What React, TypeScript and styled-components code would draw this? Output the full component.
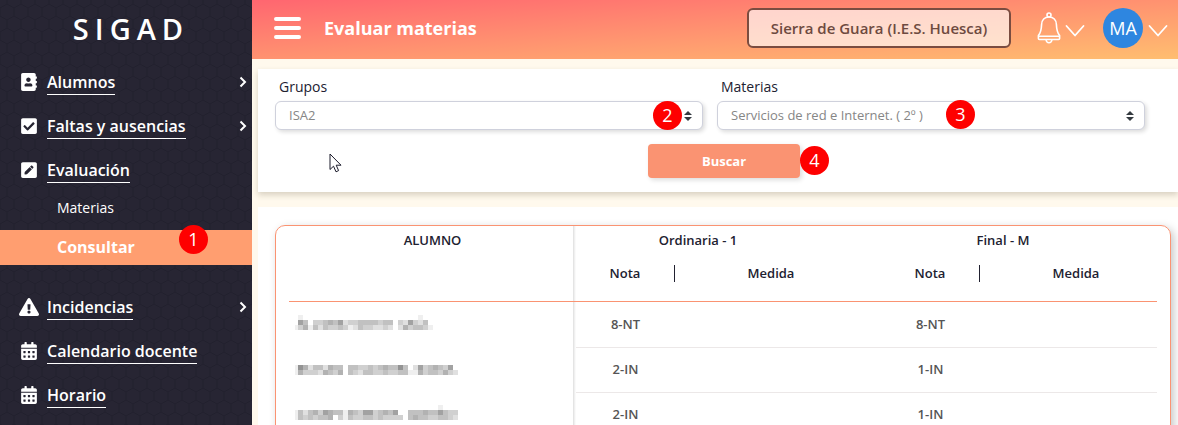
import React from 'react';
import styled, { createGlobalStyle, css } from 'styled-components';
import {
  FaAddressBook,
  FaCheckSquare,
  FaPenSquare,
  FaExclamationTriangle,
  FaCalendarAlt,
} from 'react-icons/fa';

const coral = '#fa9372';
const ink = '#212130';

const hexagons = `url("data:image/svg+xml,%3Csvg xmlns='http://www.w3.org/2000/svg' width='14' height='24' viewBox='0 0 14 24'%3E%3Cpath d='M7 0v4l7 4v8l-7 4v4M7 4L0 8v8l7 4' fill='none' stroke='%231d1c28' stroke-opacity='.55'/%3E%3C/svg%3E")`;
const selectArrows = `url("data:image/svg+xml,%3Csvg xmlns='http://www.w3.org/2000/svg' viewBox='0 0 4 5'%3E%3Cpath fill='%23343a40' d='M2 0L0 2h4zm0 5L0 3h4z'/%3E%3C/svg%3E")`;

const GlobalStyle = createGlobalStyle`
  * { box-sizing: border-box; }
  body {
    margin: 0;
    background: #fff9ed;
    color: ${ink};
    font-family: 'Open Sans', 'Noto Sans', sans-serif;
    font-size: 14px;
  }
  button, select { font-family: inherit; }
`;

const Shell = styled.div`
  position: relative;
  display: flex;
  height: 100vh;
  overflow: hidden;
`;

/* Sidebar */

const Sidebar = styled.aside`
  flex: 0 0 252px;
  background: #272533 ${hexagons};
  color: #fff;
`;

const Brand = styled.div`
  height: 60px;
  padding-left: 10px;
  line-height: 57px;
  font-size: 29px;
  font-weight: 600;
  letter-spacing: 6px;
  text-align: center;
`;

const Menu = styled.ul`
  margin: 0;
  padding: 0;
  list-style: none;
`;

const MenuLink = styled.a`
  display: flex;
  align-items: flex-start;
  height: 44px;
  padding: 10px 5px 0 19px;
  color: #fff;
  text-decoration: none;
`;

const MenuIcon = styled.span<{ $wide?: boolean }>`
  display: flex;
  justify-content: center;
  align-items: center;
  width: 20px;
  height: 24px;
  margin-right: 8px;
  font-size: ${(p) => (p.$wide ? 20 : 18)}px;
`;

const MenuText = styled.span`
  border-bottom: 1px solid #fff;
  line-height: 24px;
  font-size: 16px;
  font-weight: 600;
`;

const MenuArrow = styled.svg`
  width: 8px;
  height: 12px;
  margin: 6px 0 0 auto;
`;

const SubMenu = styled(Menu)`
  margin-bottom: 20px;
`;

const SubLink = styled.a<{ $active?: boolean }>`
  position: relative;
  display: block;
  padding-left: 57px;
  color: #fff;
  text-decoration: none;
  font-size: 14px;
  line-height: 32px;
  ${(p) =>
    p.$active &&
    css`
      margin-top: 6px;
      background: #ff9e70;
      font-size: 16px;
      font-weight: 700;
      line-height: 35px;
    `}
`;

/* Header */

const Main = styled.main`
  flex: 1;
  min-width: 0;
`;

const Header = styled.header`
  display: flex;
  align-items: center;
  height: 59px;
  padding: 0 10px 3px 22px;
  background: linear-gradient(to bottom right, #ff6670, #ffbe70);
  color: #fff;
`;

const PlainButton = styled.button`
  display: flex;
  align-items: center;
  padding: 0;
  border: 0;
  background: none;
  color: #fff;
  cursor: pointer;
`;

const Title = styled.h1`
  margin: 0 auto 0 23px;
  font-size: 18px;
  font-weight: 700;
`;

const SchoolButton = styled.button`
  width: 264px;
  height: 40px;
  margin-right: 26px;
  border: 2px solid #7a4c40;
  border-radius: 6px;
  background: rgba(255, 255, 255, 0.65);
  color: #6e4a40;
  font-size: 15px;
  font-weight: 600;
`;

const BellButton = styled(PlainButton)`
  gap: 4px;
  margin-right: 18px;
`;

const UserButton = styled(PlainButton)`
  gap: 5px;
`;

const Avatar = styled.span`
  width: 40px;
  height: 40px;
  border-radius: 50%;
  background: #2e86e0;
  font-size: 18px;
  line-height: 40px;
  text-align: center;
`;

const Caret = styled.svg`
  width: 20px;
  height: 14px;
  margin-top: 6px;
`;

/* Filters */

const Filters = styled.form`
  margin: 10px 0 15px 6px;
  padding: 8px 5px 14px 17px;
  background: #fff;
  box-shadow: 0 3px 6px rgba(60, 50, 20, 0.2);
`;

const Fields = styled.div`
  display: grid;
  grid-template-columns: 1fr 1fr;
  gap: 14px;
  padding-right: 28px;
`;

const Field = styled.div`
  position: relative;
`;

const Label = styled.label`
  display: block;
  height: 24px;
  padding-left: 4px;
  font-size: 14px;
  line-height: 20px;
`;

const Select = styled.select`
  display: block;
  width: 100%;
  height: 29px;
  padding: 0 30px 2px 13px;
  border: 1px solid #cfd1dc;
  border-radius: 6px;
  background: #fff ${selectArrows} no-repeat right 10px center / 8px 10px;
  box-shadow: 2px 2px 4px rgba(0, 0, 0, 0.14);
  color: #868686;
  font-size: 13px;
  appearance: none;
`;

const Actions = styled.div`
  display: flex;
  justify-content: center;
  margin-top: 14px;
`;

const SearchButton = styled.button`
  position: relative;
  width: 152px;
  height: 34px;
  border: 0;
  border-radius: 4px;
  background: ${coral};
  box-shadow: 2px 2px 5px rgba(0, 0, 0, 0.14);
  color: #fff;
  font-size: 13px;
  font-weight: 700;
`;

/* Numbered marks laid over the controls */

const Mark = styled.span<{ $left: string; $top: number }>`
  position: absolute;
  left: ${(p) => p.$left};
  top: ${(p) => p.$top}px;
  width: 29px;
  height: 29px;
  border-radius: 50%;
  background: #fe0000;
  color: #fff;
  font-size: 18px;
  font-weight: 400;
  line-height: 29px;
  text-align: center;
`;

const Pointer = styled.svg`
  position: absolute;
  left: 329px;
  top: 153px;
  width: 13px;
  height: 20px;
`;

/* Grades */

const Results = styled.section`
  margin-left: 6px;
  padding: 18px 7px 18px 17px;
  background: #fff;
`;

const TableCard = styled.div`
  padding: 0 13px;
  border: 1px solid ${coral};
  border-radius: 10px;
  box-shadow: 3px 3px 10px rgba(0, 0, 0, 0.22);
`;

const Table = styled.table`
  width: 100%;
  table-layout: fixed;
  border-collapse: separate;
  border-spacing: 0;
  font-size: 13px;
`;

const divider = css`
  background: linear-gradient(to left, #fafafa 1px, #f0f0f0 1px 2px, #e4e4e4 2px 3px, transparent 3px);
`;

const Col = styled.col<{ $width?: number }>`
  width: ${(p) => (p.$width ? `${p.$width}px` : 'auto')};
`;

const StudentHead = styled.th`
  ${divider}
  padding: 4px 0 0;
  border-bottom: 1px solid ${coral};
  line-height: 20px;
  font-weight: 600;
  vertical-align: top;
`;

const GroupHead = styled.th`
  height: 30px;
  padding: 0 0 2px;
  line-height: 28px;
  font-weight: 600;
`;

const GroupName = styled.span`
  display: block;
  width: 244px;
`;

const SubHead = styled.th`
  height: 46px;
  padding: 9px 0 0;
  border-bottom: 1px solid ${coral};
  line-height: 17px;
  font-weight: 600;
  vertical-align: top;
`;

const GradeLabel = styled.span`
  display: block;
  border-right: 1px solid ${ink};
`;

const MeasureLabel = styled.span`
  display: block;
  width: 192px;
`;

const StudentCell = styled.td`
  ${divider}
  height: 45px;
  padding: 0 0 0 4px;
`;

const Cell = styled.td`
  height: 45px;
  padding: 0 0 2px;
  color: #555;
  font-weight: 600;
  text-align: center;

  tr + tr > & {
    border-top: 1px solid #ece8e8;
  }
`;

const MosaicSvg = styled.svg`
  display: block;
  width: 170px;
  height: 20px;
  opacity: 0.9;
`;

/* Each line is a row of 5px tiles; a hex digit is the grey level of a tile. */
const students = [
  {
    name: [
      '.e.......................e',
      '.9bfccbab9dccbbbbcbb.cd9cdb',
      'ecaebdbccbcedbccddcd.dacbbce',
      '....................f',
    ],
    first: '8-NT',
    final: '8-NT',
  },
  {
    name: [
      '',
      'e8adbbdabb.bbccbcbabb8bfd9cbabc9f',
      'eacccdabca.bcdbbccbccbbeeacbbcacd',
      '.......................f.....ff',
    ],
    first: '2-IN',
    final: '1-IN',
  },
  {
    name: [
      '.............................e',
      'ebdbac9abbeabc99cbab9f.bbbabb9bcc',
      'ebcbcbba.cebccbbcbcccc.babbccbbcd',
      '.....................f',
    ],
    first: '2-IN',
    final: '1-IN',
  },
];

const Mosaic = ({ rows }: { rows: string[] }) => (
  <MosaicSvg viewBox="0 0 170 20" shapeRendering="crispEdges" role="img" aria-label="Nombre oculto">
    {rows.flatMap((row, y) =>
      row.split('').map((tone, x) =>
        tone === '.' ? null : (
          <rect
            key={`${x}-${y}`}
            x={x === 0 ? 2 : x * 5}
            y={y * 5}
            width={x === 0 ? 3 : 5}
            height={5}
            fill={`#${tone}${tone}${tone}`}
          />
        ),
      ),
    )}
  </MosaicSvg>
);

const Down = () => (
  <Caret viewBox="0 0 20 14" fill="none" stroke="#fff" strokeWidth="1.8" strokeLinecap="round" strokeLinejoin="round">
    <path d="M1.5 2L10 11.5L18.500 2" />
  </Caret>
);

type ItemProps = { icon: React.ReactNode; text: string; arrow?: boolean; wideIcon?: boolean };

const MenuItem = ({ icon, text, arrow, wideIcon }: ItemProps) => (
  <MenuLink href="#">
    <MenuIcon $wide={wideIcon}>{icon}</MenuIcon>
    <MenuText>{text}</MenuText>
    {arrow && (
      <MenuArrow viewBox="0 0 8 12" fill="none" stroke="#fff" strokeWidth="2">
        <path d="M1.500 1.500L6 6L1.500 10.500" />
      </MenuArrow>
    )}
  </MenuLink>
);

export default function App() {
  return (
    <Shell>
      <GlobalStyle />
      <Sidebar>
        <Brand>SIGAD</Brand>
        <nav>
          <Menu>
            <li><MenuItem icon={<FaAddressBook />} text="Alumnos" arrow /></li>
            <li><MenuItem icon={<FaCheckSquare />} text="Faltas y ausencias" arrow /></li>
            <li>
              <MenuItem icon={<FaPenSquare />} text="Evaluación" />
              <SubMenu>
                <li><SubLink href="#">Materias</SubLink></li>
                <li>
                  <SubLink href="#" $active>
                    Consultar
                    <Mark $left="179px" $top={-5}>1</Mark>
                  </SubLink>
                </li>
              </SubMenu>
            </li>
            <li><MenuItem icon={<FaExclamationTriangle />} text="Incidencias" arrow wideIcon /></li>
            <li><MenuItem icon={<FaCalendarAlt />} text="Calendario docente" /></li>
            <li><MenuItem icon={<FaCalendarAlt />} text="Horario" /></li>
          </Menu>
        </nav>
      </Sidebar>

      <Main>
        <Header>
          <PlainButton aria-label="Menú">
            <svg width="27" height="24" viewBox="0 0 27 24" stroke="#fff" strokeWidth="4" strokeLinecap="round">
              <path d="M2 3h23M2 12h23M2 21h23" />
            </svg>
          </PlainButton>
          <Title>Evaluar materias</Title>
          <SchoolButton>Sierra de Guara (I.E.S. Huesca)</SchoolButton>
          <BellButton aria-label="Notificaciones">
            <svg width="24" height="32" viewBox="0 0 24 32" fill="none" stroke="#fff" strokeWidth="1.600" strokeLinejoin="round">
              <circle cx="12" cy="3" r="2" />
              <path d="M12 5C7.500 5 4.800 8.200 4.600 12.500C4.400 18 4 20.500 1.400 23.500V26.500Q1.400 27.500 2.400 27.500H21.600Q22.600 27.500 22.600 26.500V23.500C20 20.500 19.600 18 19.400 12.500C19.200 8.200 16.500 5 12 5Z" />
              <path d="M1.600 24.200H22.400M9 27.500Q9.500 30.800 12 30.800Q14.500 30.800 15 27.500" />
            </svg>
            <Down />
          </BellButton>
          <UserButton aria-label="Usuario">
            <Avatar>MA</Avatar>
            <Down />
          </UserButton>
        </Header>

        <Filters onSubmit={(e) => e.preventDefault()}>
          <Fields>
            <Field>
              <Label htmlFor="grupos">Grupos</Label>
              <Select id="grupos"><option>ISA2</option></Select>
              <Mark $left="calc(100% - 50px)" $top={24}>2</Mark>
            </Field>
            <Field>
              <Label htmlFor="materias">Materias</Label>
              <Select id="materias"><option>Servicios de red e Internet. ( 2º )</option></Select>
              <Mark $left="229px" $top={23}>3</Mark>
            </Field>
          </Fields>
          <Actions>
            <SearchButton type="submit">
              Buscar
              <Mark $left="100%" $top={2}>4</Mark>
            </SearchButton>
          </Actions>
        </Filters>

        <Results>
          <TableCard>
            <Table>
              <colgroup>
                <Col $width={287} />
                <Col $width={99} />
                <Col $width={206} />
                <Col $width={99} />
                <Col />
              </colgroup>
              <thead>
                <tr>
                  <StudentHead rowSpan={2}>ALUMNO</StudentHead>
                  <GroupHead colSpan={2}><GroupName>Ordinaria - 1</GroupName></GroupHead>
                  <GroupHead colSpan={2}><GroupName>Final - M</GroupName></GroupHead>
                </tr>
                <tr>
                  <SubHead><GradeLabel>Nota</GradeLabel></SubHead>
                  <SubHead><MeasureLabel>Medida</MeasureLabel></SubHead>
                  <SubHead><GradeLabel>Nota</GradeLabel></SubHead>
                  <SubHead><MeasureLabel>Medida</MeasureLabel></SubHead>
                </tr>
              </thead>
              <tbody>
                {students.map((s, i) => (
                  <tr key={i}>
                    <StudentCell><Mosaic rows={s.name} /></StudentCell>
                    <Cell>{s.first}</Cell>
                    <Cell />
                    <Cell>{s.final}</Cell>
                    <Cell />
                  </tr>
                ))}
              </tbody>
            </Table>
          </TableCard>
        </Results>
      </Main>

      <Pointer viewBox="0 0 13 20" aria-hidden="true">
        <path
          d="M1 1V16.500L4.500 13.200L7 18.800L9.600 17.600L7.200 12.200H12Z"
          fill="#fff"
          stroke="#1a1a2a"
        />
      </Pointer>
    </Shell>
  );
}
